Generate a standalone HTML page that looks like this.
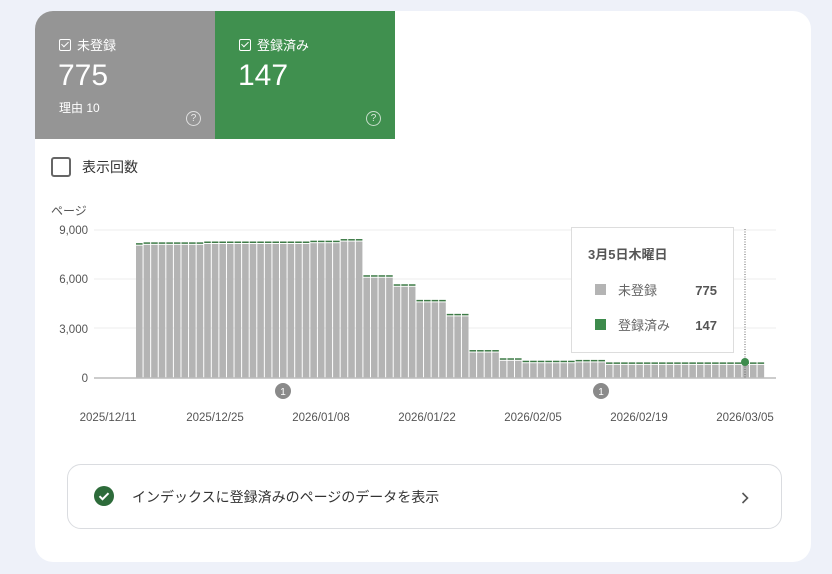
<!DOCTYPE html>
<html><head><meta charset="utf-8"><style>
*{margin:0;padding:0;box-sizing:border-box}
body{width:832px;height:574px;background:#eef1f9;font-family:"Liberation Sans","Noto Sans CJK JP",sans-serif;position:relative;overflow:hidden}
.card{position:absolute;left:35px;top:11px;width:776px;height:551px;background:#fff;border-radius:18px;overflow:hidden}
.tile{position:absolute;top:0;height:128px;width:180px;color:#fff}
.t1{left:0;background:#959595}.t2{left:180px;background:#40904f}
.lab{position:absolute;left:24px;top:24px;font-size:13px;display:flex;align-items:center}
.cb{width:12px;height:12px;border:1.3px solid #fff;border-radius:2px;margin-right:6px;position:relative}
.cb:after{content:"";position:absolute;left:3px;top:0.5px;width:3px;height:6px;border:solid #fff;border-width:0 1.3px 1.3px 0;transform:rotate(45deg)}
.num{position:absolute;left:23px;top:48px;font-size:30px}
.sub{position:absolute;left:24px;top:88px;font-size:12px}
.q{position:absolute;right:14px;bottom:13px;width:15px;height:15px;border:1.3px solid rgba(255,255,255,.7);border-radius:50%;font-size:10px;text-align:center;line-height:13px;color:rgba(255,255,255,.8)}
.imp{position:absolute;left:16px;top:146px;display:flex;align-items:center;font-size:14px;color:#333}
.imp span{width:20px;height:20px;border:2px solid #666;border-radius:3px;margin-right:11px}
.btn{position:absolute;left:32px;top:453px;width:715px;height:65px;border:1px solid #dadce0;border-radius:14px}
.btn .t{position:absolute;left:64px;top:22px;font-size:14px;color:#333}
</style></head><body>
<div class="card">
<div class="tile t1"><div class="lab"><div class="cb"></div>未登録</div><div class="num">775</div><div class="sub">理由 10</div><div class="q">?</div></div>
<div class="tile t2"><div class="lab"><div class="cb"></div>登録済み</div><div class="num">147</div><div class="q">?</div></div>
<div class="imp"><span></span>表示回数</div>
<div class="btn">
<svg style="position:absolute;left:26px;top:21px" width="20" height="20"><circle cx="10" cy="10" r="10" fill="#2d6b3a"/><path d="M5.5 10.2l3 3 6-6" stroke="#fff" stroke-width="2" fill="none"/></svg>
<div class="t">インデックスに登録済みのページのデータを表示</div>
<svg style="position:absolute;left:672px;top:26px" width="10" height="14"><path d="M2.5 2l5 5-5 5" stroke="#555" stroke-width="1.6" fill="none"/></svg>
</div>
</div>
<svg id="ch" style="position:absolute;left:0;top:0" width="832" height="574" font-family="Liberation Sans, Noto Sans CJK JP, sans-serif">
<text x="51" y="215" font-size="12" fill="#555">ページ</text>
<g font-size="11.5" fill="#555" text-anchor="end">
<text x="88" y="234">9,000</text><text x="88" y="283">6,000</text><text x="88" y="333">3,000</text><text x="88" y="382">0</text></g>
<g stroke="#eee"><line x1="94" x2="776" y1="230" y2="230"/><line x1="94" x2="776" y1="279" y2="279"/><line x1="94" x2="776" y1="328" y2="328"/></g>
<g id="bars"></g>
<line x1="94" x2="776" y1="378" y2="378" stroke="#bbb" stroke-width="1.5"/>
<g font-size="11.5" fill="#555" text-anchor="middle">
<text x="108" y="421">2025/12/11</text><text x="215" y="421">2025/12/25</text><text x="321" y="421">2026/01/08</text><text x="427" y="421">2026/01/22</text><text x="533" y="421">2026/02/05</text><text x="639" y="421">2026/02/19</text><text x="745" y="421">2026/03/05</text></g>
<circle cx="283" cy="391" r="8" fill="#8a8a8a"/><text x="283" y="395" font-size="10" fill="#fff" text-anchor="middle">1</text>
<circle cx="601" cy="391" r="8" fill="#8a8a8a"/><text x="601" y="395" font-size="10" fill="#fff" text-anchor="middle">1</text>
<line x1="745" x2="745" y1="229" y2="378" stroke="#666" stroke-dasharray="1,1.5"/>
<circle cx="745" cy="362" r="4" fill="#3d8b4c"/>
<rect x="571.5" y="227.5" width="162" height="125" fill="#fff" stroke="#ddd"/>
<text x="588" y="259" font-size="13" font-weight="bold" fill="#555">3月5日木曜日</text>
<rect x="595" y="284" width="11" height="11" fill="#b4b4b4"/><text x="618" y="295" font-size="13" fill="#666">未登録</text><text x="717" y="295" font-size="13" font-weight="bold" fill="#555" text-anchor="end">775</text>
<rect x="595" y="319" width="11" height="11" fill="#3d8b4c"/><text x="618" y="330" font-size="13" fill="#666">登録済み</text><text x="717" y="330" font-size="13" font-weight="bold" fill="#555" text-anchor="end">147</text>
</svg>
<script>
(function(){
var segs=[[136,143,8200],[143,203,8250],[203,310,8300],[310,340,8350],[340,362,8450],[362,392,6250],[392,415,5700],[415,445,4750],[445,468,3900],[468,498,1700],[498,522,1200],[522,575,1050],[575,604,1100],[604,764,950]];
var s="",w=7.58,NS="http://www.w3.org/2000/svg",g=document.getElementById("bars");
function r(x,y,wd,h,f){var e=document.createElementNS(NS,"rect");e.setAttribute("x",x);e.setAttribute("y",y);e.setAttribute("width",wd);e.setAttribute("height",h);e.setAttribute("fill",f);g.appendChild(e);}
for(var x=136;x<762;x+=w){var c=x+w/2,v=950;for(var i=0;i<segs.length;i++){if(c>=segs[i][0]&&c<segs[i][1]){v=segs[i][2];break;}}
var t=378-v*148/9000;
r(x,t+2.5,w-1,378-t-2.5,"#b4b4b4");
r(x,t,w-1,1.5,"#3d7a46");}
})();
</script>
</body></html>
